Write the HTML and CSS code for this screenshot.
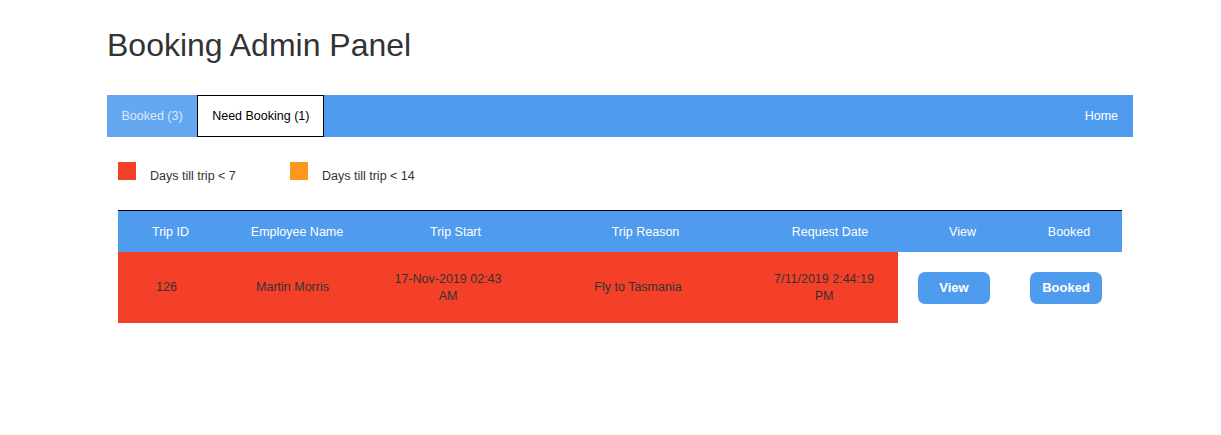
FILE: index.html
```html
<!DOCTYPE html>
<html lang="en">
<head>
<meta charset="utf-8">
<title>Booking Admin Panel</title>
<link rel="stylesheet" href="styles.css">
</head>
<body>
<div class="page">
  <h1 class="title">Booking Admin Panel</h1>
  <nav class="nav">
    <a class="tab tab-muted">Booked (3)</a>
    <a class="tab tab-active">Need Booking (1)</a>
    <a class="tab tab-home">Home</a>
  </nav>
  <div class="legend">
    <div class="legend-item"><span class="swatch swatch-red"></span><span class="legend-text">Days till trip &lt; 7</span></div>
    <div class="legend-item"><span class="swatch swatch-orange"></span><span class="legend-text">Days till trip &lt; 14</span></div>
  </div>
  <div class="table">
    <div class="thead">
      <div class="th">Trip ID</div>
      <div class="th">Employee Name</div>
      <div class="th">Trip Start</div>
      <div class="th">Trip Reason</div>
      <div class="th">Request Date</div>
      <div class="th">View</div>
      <div class="th">Booked</div>
    </div>
    <div class="trow">
      <div class="td urgent">126</div>
      <div class="td urgent">Martin Morris</div>
      <div class="td urgent">17-Nov-2019 02:43 AM</div>
      <div class="td urgent">Fly to Tasmania</div>
      <div class="td urgent">7/11/2019 2:44:19 PM</div>
      <div class="td"><button class="btn">View</button></div>
      <div class="td"><button class="btn">Booked</button></div>
    </div>
  </div>
</div>
</body>
</html>
```

FILE: styles.css
```css
html, body {
  margin: 0;
  padding: 0;
  background: #fff;
}
body {
  font-family: "Liberation Sans", Arial, sans-serif;
  font-size: 12.5px;
  color: #333;
}
.page {
  width: 1026px;
  margin-left: 107px;
}
.title {
  margin: 27px 0 31px;
  font-size: 32px;
  line-height: 37px;
  font-weight: normal;
  color: #333;
}
.nav {
  display: flex;
  height: 42px;
  background: #4f9bee;
}
.tab {
  display: block;
  padding: 0 14px;
  line-height: 42px;
  font-size: 12.5px;
  color: #fff;
  text-decoration: none;
  box-sizing: border-box;
}
.tab-muted {
  background: #64a8f2;
  color: #dce9f7;
  padding: 0 14.5px;
}
.tab-active {
  background: #fff;
  color: #000;
  border: 1px solid #000;
  line-height: 40px;
}
.tab-home {
  margin-left: auto;
  padding: 0 15px;
}
.legend {
  display: flex;
  padding-left: 11px;
  margin-top: 25px;
  height: 18px;
}
.legend-item {
  display: flex;
  align-items: flex-start;
  width: 172px;
}
.swatch {
  width: 18px;
  height: 18px;
  flex: none;
}
.swatch-red { background: #f44029; }
.swatch-orange { background: #fd981f; }
.legend-text {
  margin-left: 14px;
  margin-top: 6px;
  line-height: 17px;
}
.table {
  margin: 30px 0 0 11px;
  width: 1004px;
}
.thead {
  display: grid;
  grid-template-columns: 105px 148px 169px 211px 158px 107px 106px;
  border-top: 1px solid #000;
  background: #4f9bee;
  height: 41px;
}
.th {
  display: flex;
  align-items: center;
  justify-content: center;
  color: #fff;
}
.trow {
  display: grid;
  grid-template-columns: 97px 155px 156px 224px 148px 112px 112px;
  height: 71px;
}
.td {
  display: flex;
  align-items: center;
  justify-content: center;
  text-align: center;
  padding: 0 16px;
  line-height: 17px;
  color: #333;
}
.urgent {
  background: #f44029;
}
.btn {
  width: 72px;
  height: 32px;
  border: none;
  border-radius: 7px;
  background: #4f9bee;
  color: #fff;
  font-family: "Liberation Sans", Arial, sans-serif;
  font-weight: bold;
  font-size: 13px;
  padding: 0;
  flex: none;
}
```
